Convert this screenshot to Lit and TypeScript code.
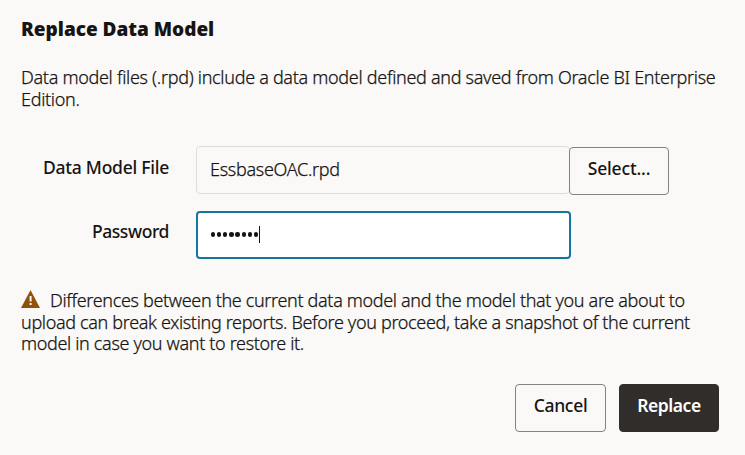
import { LitElement, html, css } from "lit";
import { customElement } from "lit/decorators.js";

@customElement("app-root")
export class AppRoot extends LitElement {
  static styles = css`
    :host {
      display: block;
      width: 745px;
      height: 455px;
      box-sizing: border-box;
      padding: 18px 26px 0 21px;
      overflow: hidden;
      background: #fbf9f8;
      color: #161513;
      font: 300 18px/22px "Noto Sans", sans-serif;
    }
    h1 {
      margin: 0;
      font-size: 19px;
      font-weight: 900;
      line-height: 22px;
      letter-spacing: -0.02px;
    }
    p {
      margin: 0;
      white-space: nowrap;
      letter-spacing: -0.3px;
      -webkit-text-stroke: 0.25px currentColor;
    }
    .line { display: block; }
    .intro { margin-top: 26px; }
    .form {
      display: grid;
      grid-template-columns: 148px 27px 374px 100px;
      row-gap: 17px;
      margin-top: 36px;
    }
    .label {
      grid-column: 1;
      padding-top: 10px;
      text-align: right;
      font-weight: 500;
      font-size: 17.5px;
      letter-spacing: -0.25px;
    }
    .label.password { padding-top: 9px; letter-spacing: -0.42px; }
    .field {
      grid-column: 3;
      box-sizing: border-box;
      height: 48px;
      display: flex;
      align-items: center;
      padding: 0 13px 2px;
      border: 1px solid #dfdddb;
      border-radius: 4px;
      letter-spacing: -0.3px;
      -webkit-text-stroke: 0.25px currentColor;
    }
    .field.active {
      width: 375px;
      padding: 0 12px 1px;
      border: 2px solid #13769b;
      background: #fff;
    }
    .mask { display: flex; gap: 1.7px; margin: 0 0.6px 0 0.6px; }
    .dot { width: 4.5px; height: 4.5px; border-radius: 50%; background: #161513; }
    .caret { width: 1px; height: 17px; background: #161513; }
    button {
      box-sizing: border-box;
      height: 48px;
      padding: 0 0 5px;
      border: 1px solid #85827f;
      border-radius: 4px;
      background: transparent;
      color: inherit;
      font: 500 17.5px/22px "Noto Sans", sans-serif;
      letter-spacing: -0.3px;
    }
    .select { width: 100px; margin: 1px 0 -1px -1px; padding-bottom: 6px; letter-spacing: -0.15px; }
    .warning { margin-top: 31px; line-height: 21.6px; letter-spacing: -0.34px; }
    .icon { width: 19px; height: 18px; margin-right: 10px; vertical-align: -1px; }
    .actions { display: flex; justify-content: flex-end; gap: 13px; margin-top: 29px; }
    .cancel { width: 91px; }
    .replace {
      width: 100px;
      border-color: #312d2a;
      background: #312d2a;
      color: #fff;
      font-weight: 600;
      letter-spacing: -0.45px;
    }
  `;

  render() {
    return html`
      <h1>Replace Data Model</h1>
      <p class="intro">
        <span class="line">Data model files (.rpd) include a data model defined and saved from Oracle BI Enterprise</span>
        <span class="line">Edition.</span>
      </p>
      <div class="form">
        <div class="label">Data Model File</div>
        <div class="field">EssbaseOAC.rpd</div>
        <button class="select">Select...</button>
        <div class="label password">Password</div>
        <div class="field active">
          <div class="mask">${Array.from({ length: 8 }, () => html`<span class="dot"></span>`)}</div>
          <span class="caret"></span>
        </div>
      </div>
      <p class="warning">
        <span class="line"><svg class="icon" viewBox="0 0 19 18">
          <path d="M9.5 0L19 18H0Z" fill="#8f520a" />
          <path d="M8.6 6h2v5.5h-2zM8.6 13h2v2h-2z" fill="#fbf9f8" />
        </svg>Differences between the current data model and the model that you are about to</span>
        <span class="line">upload can break existing reports. Before you proceed, take a snapshot of the current</span>
        <span class="line">model in case you want to restore it.</span>
      </p>
      <div class="actions">
        <button class="cancel">Cancel</button>
        <button class="replace">Replace</button>
      </div>`;
  }
}
